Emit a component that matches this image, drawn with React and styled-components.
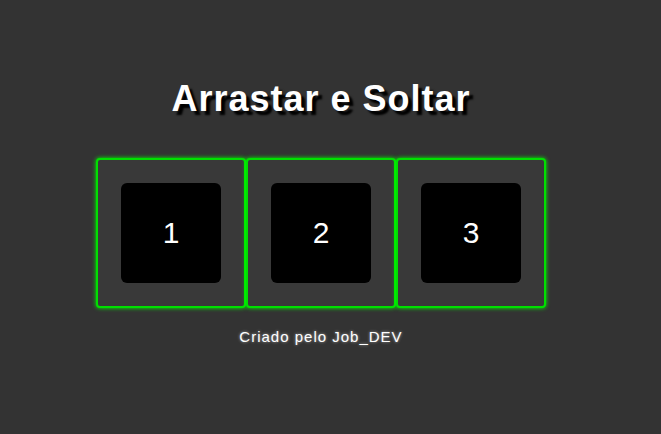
import React from 'react';
import styled, { createGlobalStyle } from 'styled-components';

const GlobalStyle = createGlobalStyle`
    html, body {
        margin: 0;
        padding: 0;
        background: #333333;
        font-family: "Liberation Sans", Arial, sans-serif;
    }
`;

const Page = styled.div`
    display: flex;
    flex-direction: column;
    align-items: center;
    padding: 78px 19px 0 0;
    min-height: 434px;
    box-sizing: border-box;
`;

const Title = styled.h1`
    margin: 0;
    font-size: 36px;
    line-height: 41px;
    font-weight: bold;
    letter-spacing: 1px;
    color: #ffffff;
    text-shadow: 4px 4px 2px #000000;
`;

const Board = styled.div`
    display: flex;
    margin-top: 39px;
`;

const Slot = styled.div`
    width: 150px;
    height: 150px;
    box-sizing: border-box;
    display: flex;
    align-items: center;
    justify-content: center;
    background: #393939;
    border: 2px solid #00e000;
    border-radius: 4px;
    box-shadow: 0 0 4px #00ff00;
`;

const Item = styled.div`
    width: 100px;
    height: 100px;
    display: flex;
    align-items: center;
    justify-content: center;
    background: #000000;
    border-radius: 6px;
    color: #ffffff;
    font-size: 30px;
`;

const Footer = styled.p`
    margin: 20px 0 0;
    font-size: 15px;
    line-height: 17px;
    letter-spacing: 1px;
    color: #ffffff;
    text-shadow: 0 0 3px rgba(255, 255, 255, 0.6);
`;

const items = ['1', '2', '3'];

const App = () => {
    return (
        <>
            <GlobalStyle />
            <Page>
                <Title>Arrastar e Soltar</Title>
                <Board>
                    {items.map(item => (
                        <Slot key={item}>
                            <Item draggable>{item}</Item>
                        </Slot>
                    ))}
                </Board>
                <Footer>Criado pelo Job_DEV</Footer>
            </Page>
        </>
    )
}

export default App;
